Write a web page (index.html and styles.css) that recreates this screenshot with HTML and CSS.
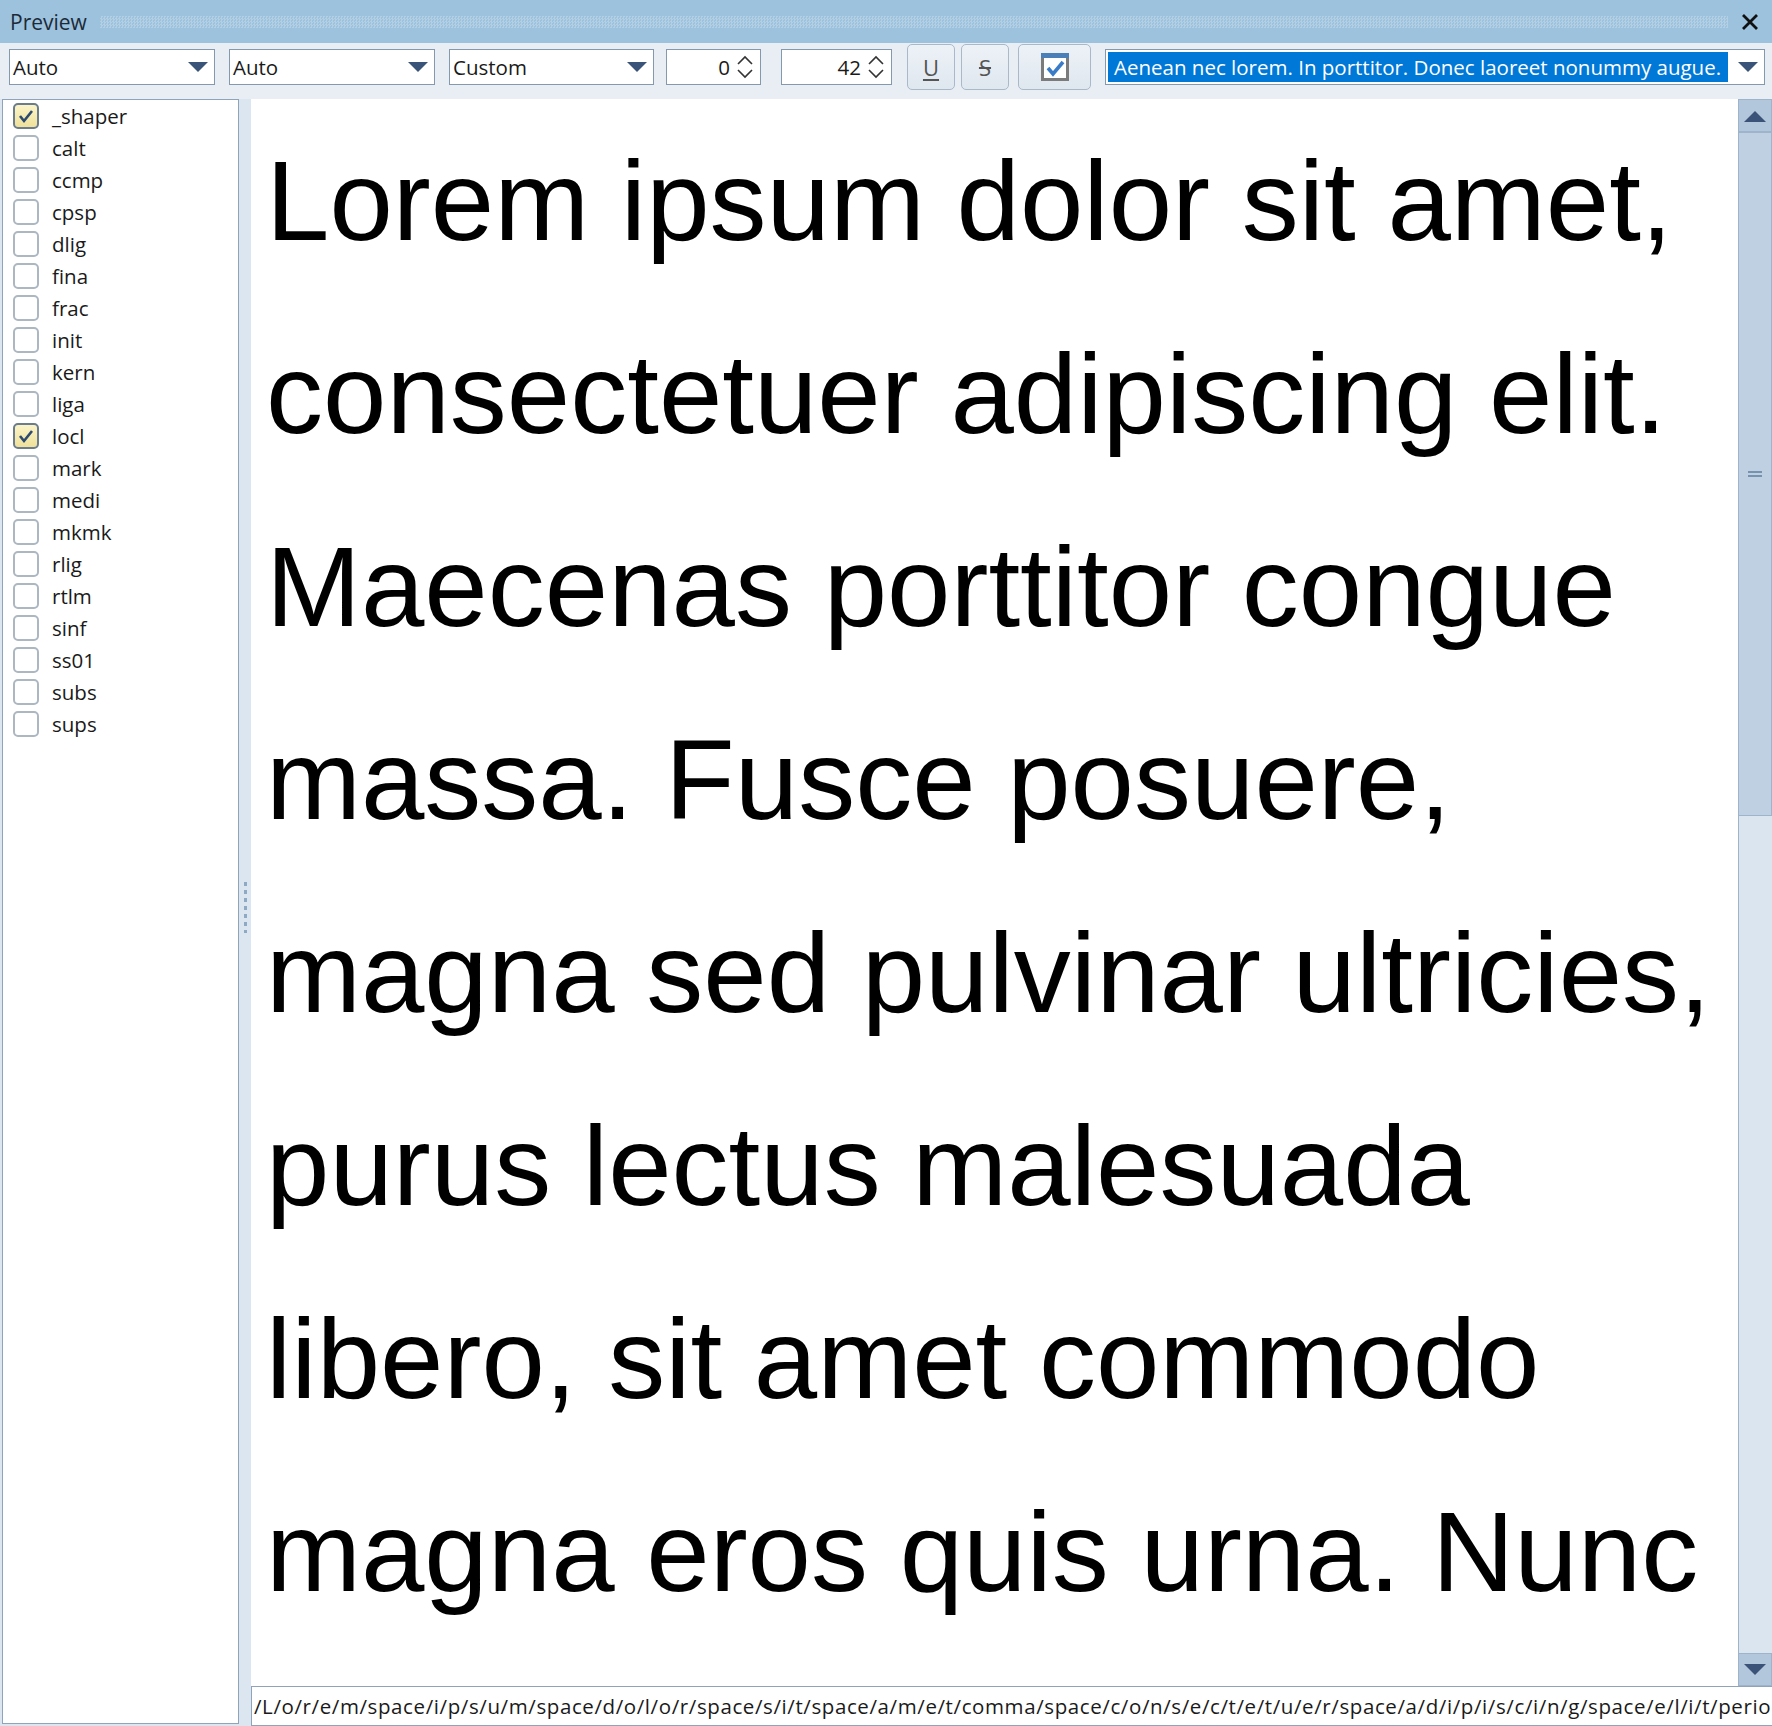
FILE: index.html
```html
<!DOCTYPE html>
<html>
<head>
    <meta charset="UTF-8">
    <title>Preview</title>
    <link rel="stylesheet" href="styles.css">
</head>
<body>
<div class="window">
    <!-- 标题栏 -->
    <div class="titlebar">
        <span class="title">Preview</span>
        <span class="grip"></span>
        <span class="close">
            <svg width="20" height="20" viewBox="0 0 20 20"><path d="M3 3 L17 17 M17 3 L3 17" stroke="#111" stroke-width="2.8" fill="none"/></svg>
        </span>
    </div>

    <!-- 工具栏 -->
    <div class="toolbar">
        <div class="combo combo-a">
            <span class="combo-text">Auto</span>
            <svg class="drop" width="20" height="11" viewBox="0 0 20 11"><polygon points="0,0 20,0 10,10" fill="#3a5479"/></svg>
        </div>
        <div class="combo combo-b">
            <span class="combo-text">Auto</span>
            <svg class="drop" width="20" height="11" viewBox="0 0 20 11"><polygon points="0,0 20,0 10,10" fill="#3a5479"/></svg>
        </div>
        <div class="combo combo-c">
            <span class="combo-text">Custom</span>
            <svg class="drop" width="20" height="11" viewBox="0 0 20 11"><polygon points="0,0 20,0 10,10" fill="#3a5479"/></svg>
        </div>
        <div class="spin spin-a">
            <span class="num">0</span>
            <svg width="18" height="28" viewBox="0 0 18 28"><polyline points="2,11 9,4 16,11" stroke="#333" stroke-width="1.6" fill="none"/><polyline points="2,17 9,24 16,17" stroke="#333" stroke-width="1.6" fill="none"/></svg>
        </div>
        <div class="spin spin-b">
            <span class="num">42</span>
            <svg width="18" height="28" viewBox="0 0 18 28"><polyline points="2,11 9,4 16,11" stroke="#333" stroke-width="1.6" fill="none"/><polyline points="2,17 9,24 16,17" stroke="#333" stroke-width="1.6" fill="none"/></svg>
        </div>
        <div class="tbtn btn-u"><span class="u">U</span></div>
        <div class="tbtn btn-s"><span class="s">S</span></div>
        <div class="tbtn btn-check">
            <svg width="28" height="28" viewBox="0 0 28 28">
                <rect x="1.5" y="1.5" width="25" height="25" fill="#fff" stroke="#7b7b7b" stroke-width="3"/>
                <rect x="0" y="0" width="28" height="5" fill="#4a7fb8"/>
                <polyline points="7,15 12,21 22,9" stroke="#3a7bc8" stroke-width="3.6" fill="none"/>
            </svg>
        </div>
        <div class="combo combo-text-sample">
            <span class="sel">Aenean nec lorem. In porttitor. Donec laoreet nonummy augue.</span>
            <svg class="drop" width="20" height="11" viewBox="0 0 20 11"><polygon points="0,0 20,0 10,10" fill="#3a5479"/></svg>
        </div>
    </div>

    <!-- 主体 -->
    <div class="main">
        <div class="features">
            <div class="feat"><span class="box on"><svg width="18" height="18" viewBox="0 0 18 18"><polyline points="3,9 7,14 15,4" stroke="#2d4b72" stroke-width="2.6" fill="none"/></svg></span>_shaper</div>
            <div class="feat"><span class="box"></span>calt</div>
            <div class="feat"><span class="box"></span>ccmp</div>
            <div class="feat"><span class="box"></span>cpsp</div>
            <div class="feat"><span class="box"></span>dlig</div>
            <div class="feat"><span class="box"></span>fina</div>
            <div class="feat"><span class="box"></span>frac</div>
            <div class="feat"><span class="box"></span>init</div>
            <div class="feat"><span class="box"></span>kern</div>
            <div class="feat"><span class="box"></span>liga</div>
            <div class="feat"><span class="box on"><svg width="18" height="18" viewBox="0 0 18 18"><polyline points="3,9 7,14 15,4" stroke="#2d4b72" stroke-width="2.6" fill="none"/></svg></span>locl</div>
            <div class="feat"><span class="box"></span>mark</div>
            <div class="feat"><span class="box"></span>medi</div>
            <div class="feat"><span class="box"></span>mkmk</div>
            <div class="feat"><span class="box"></span>rlig</div>
            <div class="feat"><span class="box"></span>rtlm</div>
            <div class="feat"><span class="box"></span>sinf</div>
            <div class="feat"><span class="box"></span>ss01</div>
            <div class="feat"><span class="box"></span>subs</div>
            <div class="feat"><span class="box"></span>sups</div>
        </div>

        <div class="splitter"><span class="split-grip"></span></div>

        <div class="preview-col">
            <div class="preview-row">
                <div class="preview-text">
                    <div class="line">Lorem ipsum dolor sit amet,</div>
                    <div class="line">consectetuer adipiscing elit.</div>
                    <div class="line">Maecenas porttitor congue</div>
                    <div class="line">massa. Fusce posuere,</div>
                    <div class="line">magna sed pulvinar ultricies,</div>
                    <div class="line">purus lectus malesuada</div>
                    <div class="line">libero, sit amet commodo</div>
                    <div class="line">magna eros quis urna. Nunc</div>
                </div>
                <div class="scrollbar">
                    <div class="sb-btn">
                        <svg width="22" height="12" viewBox="0 0 22 12"><polygon points="0,12 22,12 11,1" fill="#3b5379"/></svg>
                    </div>
                    <div class="sb-thumb">
                        <svg width="14" height="6" viewBox="0 0 14 6"><path d="M0 1 H14 M0 5 H14" stroke="#607d9d" stroke-width="1.5"/></svg>
                    </div>
                    <div class="sb-track"></div>
                    <div class="sb-btn">
                        <svg width="22" height="12" viewBox="0 0 22 12"><polygon points="0,0 22,0 11,11" fill="#3b5379"/></svg>
                    </div>
                </div>
            </div>
            <div class="glyphs">/L/o/r/e/m/space/i/p/s/u/m/space/d/o/l/o/r/space/s/i/t/space/a/m/e/t/comma/space/c/o/n/s/e/c/t/e/t/u/e/r/space/a/d/i/p/i/s/c/i/n/g/space/e/l/i/t/period</div>
        </div>
    </div>
</div>
</body>
</html>
```

FILE: styles.css
```css
*{ box-sizing: border-box; }
html,body{ margin: 0; padding: 0; }
body{ font-family: "Open Sans", "Noto Sans", sans-serif; font-size: 20.5px; color: #1a1a1a; background: #dce6f0; overflow: hidden; }

.window{ height: 1726px; display: flex; flex-direction: column; }

/* 标题栏 */
.titlebar{ height: 43px; background: #9dc2dd; display: flex; align-items: center; padding: 0 10px 0 10px; }
.title{ font-size: 21px; color: #1c2a38; }
.grip{ flex: 1; height: 12px; margin: 0 10px 0 13px; background-image: repeating-conic-gradient(#b3cfe4 0 25%, #9dc2dd 0 50%); background-size: 3px 3px; }
.close{ display: flex; width: 24px; justify-content: center; }

/* 工具栏 */
.toolbar{ height: 56px; background: #e8eef4; display: flex; align-items: center; padding: 0 0 8px 9px; }
.combo{ height: 36px; background: #fff; border: 1px solid #8498ae; display: flex; align-items: center; padding: 0 6px 0 3px; }
.combo-text{ flex: 1; }
.combo-a, .combo-b{ width: 206px; }
.combo-b{ margin-left: 14px; }
.combo-c{ width: 205px; margin-left: 14px; }
.spin{ height: 36px; background: #fff; border: 1px solid #8498ae; display: flex; align-items: center; justify-content: flex-end; padding-right: 6px; gap: 6px; }
.spin-a{ width: 95px; margin-left: 12px; }
.spin-b{ width: 111px; margin-left: 20px; }
.tbtn{ height: 46px; border: 1px solid #a9b9ca; border-radius: 5px; background: linear-gradient(#edf2f7, #dfe7ef); display: flex; align-items: center; justify-content: center; color: #555; font-size: 22px; }
.btn-u{ width: 48px; margin-left: 15px; }
.btn-s{ width: 48px; margin-left: 6px; }
.btn-check{ width: 73px; margin-left: 9px; }
.u{ text-decoration: underline; text-underline-offset: 3px; }
.s{ text-decoration: line-through; }
.combo-text-sample{ width: 660px; margin-left: 14px; padding-left: 2px; }
.sel{ flex: 1; background: #0078d7; color: #fff; line-height: 30px; white-space: nowrap; overflow: hidden; padding-left: 6px; margin-right: 10px; }

/* 主体 */
.main{ flex: 1; display: flex; min-height: 0; }
.features{ width: 237px; margin: 0 0 2px 2px; background: #fff; border: 1px solid #8fa3ba; }
.feat{ height: 32px; display: flex; align-items: center; padding-left: 10px; }
.box{ width: 26px; height: 26px; border: 2px solid #adb7c1; border-radius: 5px; background: #fff; margin-right: 13px; display: flex; align-items: center; justify-content: center; }
.box.on{ border-color: #6b7c8d; background: linear-gradient(#fbf4c8, #efe19a); }

.splitter{ width: 12px; display: flex; align-items: center; justify-content: center; }
.split-grip{ width: 3px; height: 51px; margin-top: -10px; background-image: linear-gradient(#8ea9c4 50%, transparent 50%); background-size: 3px 8px; }

.preview-col{ flex: 1; display: flex; flex-direction: column; min-width: 0; }
.preview-row{ flex: 1; display: flex; min-height: 0; }
.preview-text{ flex: 1; background: #fff; padding: 5px 0 0 15px; overflow: hidden; font-family: "Liberation Sans", Arial, sans-serif; font-size: 114px; line-height: 193px; color: #000; }
.line{ white-space: nowrap; }

.scrollbar{ width: 34px; display: flex; flex-direction: column; background: #dbe5ef; border-left: 1px solid #9eb4ca; }
.sb-btn{ height: 33px; background: #b2c7db; border: 1px solid #9eb4ca; border-left: 0; display: flex; align-items: center; justify-content: center; }
.sb-thumb{ height: 684px; background: #bed0e2; border: 1px solid #9eb4ca; border-left: 0; display: flex; align-items: center; justify-content: center; }
.sb-track{ flex: 1; }

.glyphs{ height: 40px; background: #fff; border: 1px solid #8fa3ba; border-right: 0; padding-left: 2px; line-height: 38px; letter-spacing: 0.6px; white-space: nowrap; overflow: hidden; }
```
